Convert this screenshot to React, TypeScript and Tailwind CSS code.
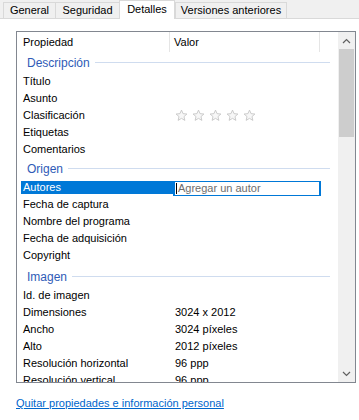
import type React from 'react';

type Row =
  | { kind: 'group'; label: string; extra?: boolean }
  | { kind: 'item'; label: string; value?: React.ReactNode; selected?: boolean };

const rows: Row[] = [
  { kind: 'group', label: 'Descripción' },
  { kind: 'item', label: 'Título' },
  { kind: 'item', label: 'Asunto' },
  { kind: 'item', label: 'Clasificación', value: <Stars /> },
  { kind: 'item', label: 'Etiquetas' },
  { kind: 'item', label: 'Comentarios' },
  { kind: 'group', label: 'Origen' },
  { kind: 'item', label: 'Autores', selected: true },
  { kind: 'item', label: 'Fecha de captura' },
  { kind: 'item', label: 'Nombre del programa' },
  { kind: 'item', label: 'Fecha de adquisición' },
  { kind: 'item', label: 'Copyright' },
  { kind: 'group', label: 'Imagen', extra: true },
  { kind: 'item', label: 'Id. de imagen' },
  { kind: 'item', label: 'Dimensiones', value: '3024 x 2012' },
  { kind: 'item', label: 'Ancho', value: '3024 píxeles' },
  { kind: 'item', label: 'Alto', value: '2012 píxeles' },
  { kind: 'item', label: 'Resolución horizontal', value: '96 ppp' },
  { kind: 'item', label: 'Resolución vertical', value: '96 ppp' },
];

const tabs = ['General', 'Seguridad', 'Detalles', 'Versiones anteriores'];
const tabWidths: Record<string, string> = {
  General: 'w-[52px]',
  Seguridad: 'w-[64px]',
  Detalles: 'w-[56px]',
  'Versiones anteriores': 'w-[112px]',
};

function Stars() {
  return (
    <div className="flex gap-[4px]">
      {[0, 1, 2, 3, 4].map((i) => (
        <svg key={i} width="13" height="13" viewBox="0 0 24 24">
          <polygon
            points="12,2 14.9,8.6 22,9.3 16.6,14 18.2,21 12,17.3 5.8,21 7.4,14 2,9.3 9.1,8.6"
            fill="#f7f7f7"
            stroke="#c4c4c4"
            strokeWidth="1.6"
            strokeLinejoin="round"
          />
        </svg>
      ))}
    </div>
  );
}

function Chevron({ up }: { up?: boolean }) {
  return (
    <svg width="9" height="6" viewBox="0 0 9 6">
      <polyline
        points={up ? '1,5 4.5,1.5 8,5' : '1,1 4.5,4.5 8,1'}
        fill="none"
        stroke="#606060"
        strokeWidth="1.2"
      />
    </svg>
  );
}

export default function App() {
  return (
    <div className="w-[359px] h-[420px] bg-white overflow-hidden font-['Liberation_Sans',Arial,sans-serif] text-[11px] text-black">
      {/* pestañas */}
      <div className="flex items-end h-[19px] pl-[3px] bg-[#f0f0f0] border-b border-[#d9d9d9]">
        {tabs.map((t) =>
          t === 'Detalles' ? (
            <div
              key={t}
              className={`${tabWidths[t]} h-[19px] -mb-px bg-white border-x border-t border-[#d9d9d9] flex justify-center pt-[2px] leading-[13px] text-[11px]`}
            >
              {t}
            </div>
          ) : (
            <div
              key={t}
              className={`${tabWidths[t]} h-[16px] bg-[#f0f0f0] border-t border-l last:border-r border-[#d9d9d9] flex items-center justify-center text-[11px]`}
            >
              {t}
            </div>
          ),
        )}
      </div>

      <div className="px-[16px] pt-[12px]">
        <div className="h-[352px] w-[340px] border border-[#828790] flex">
          <div className="flex-1 flex flex-col overflow-hidden">
            {/* encabezado */}
            <div className="h-[20px] shrink-0 flex items-center">
              <div className="w-[153px] pl-[6px] h-full flex items-center border-r border-[#e5e5e5]">Propiedad</div>
              <div className="w-[150px] pl-[4px] h-full flex items-center border-r border-[#e5e5e5]">Valor</div>
            </div>

            {rows.map((r, i) =>
              r.kind === 'group' ? (
                <div
                  key={i}
                  className={`${r.extra ? 'h-[23px] pt-[2px]' : 'h-[21px]'} shrink-0 flex items-center pl-[10px] pr-[8px] gap-[5px]`}
                >
                  <span className="text-[12px] text-[#2f5bb7]">{r.label}</span>
                  <div className="flex-1 h-px bg-[#cfdcef]" />
                </div>
              ) : (
                <div key={i} className="h-[17px] shrink-0 flex pl-[4px]">
                  {r.selected ? (
                    <>
                      <div className="w-[152px] mt-[2px] h-[13px] bg-[#0078d7] text-white pl-[2px] flex items-center">
                        {r.label}
                      </div>
                      <div className="w-[148px] mt-[2px] h-[15px] border-y border-x-2 border-[#0078d7] bg-white flex items-center pl-[1px]">
                        <div className="w-px h-[11px] bg-black mr-[1px]" />
                        <span className="text-[#6d6d6d]">Agregar un autor</span>
                      </div>
                    </>
                  ) : (
                    <>
                      <div className="w-[152px] pl-[2px] flex items-center">{r.label}</div>
                      <div className="flex-1 pl-[2px] flex items-center">{r.value}</div>
                    </>
                  )}
                </div>
              ),
            )}
          </div>

          {/* barra de desplazamiento */}
          <div className="w-[17px] bg-[#f0f0f0] flex flex-col">
            <div className="h-[17px] pt-px flex items-center justify-center">
              <Chevron up />
            </div>
            <div className="h-[88px] mx-px bg-[#cdcdcd]" />
            <div className="flex-1" />
            <div className="h-[17px] flex items-center justify-center">
              <Chevron />
            </div>
          </div>
        </div>

        <div className="mt-[12px]">
          <a href="#" className="text-[#0066cc] underline text-[11px]">
            Quitar propiedades e información personal
          </a>
        </div>
      </div>
    </div>
  );
}
